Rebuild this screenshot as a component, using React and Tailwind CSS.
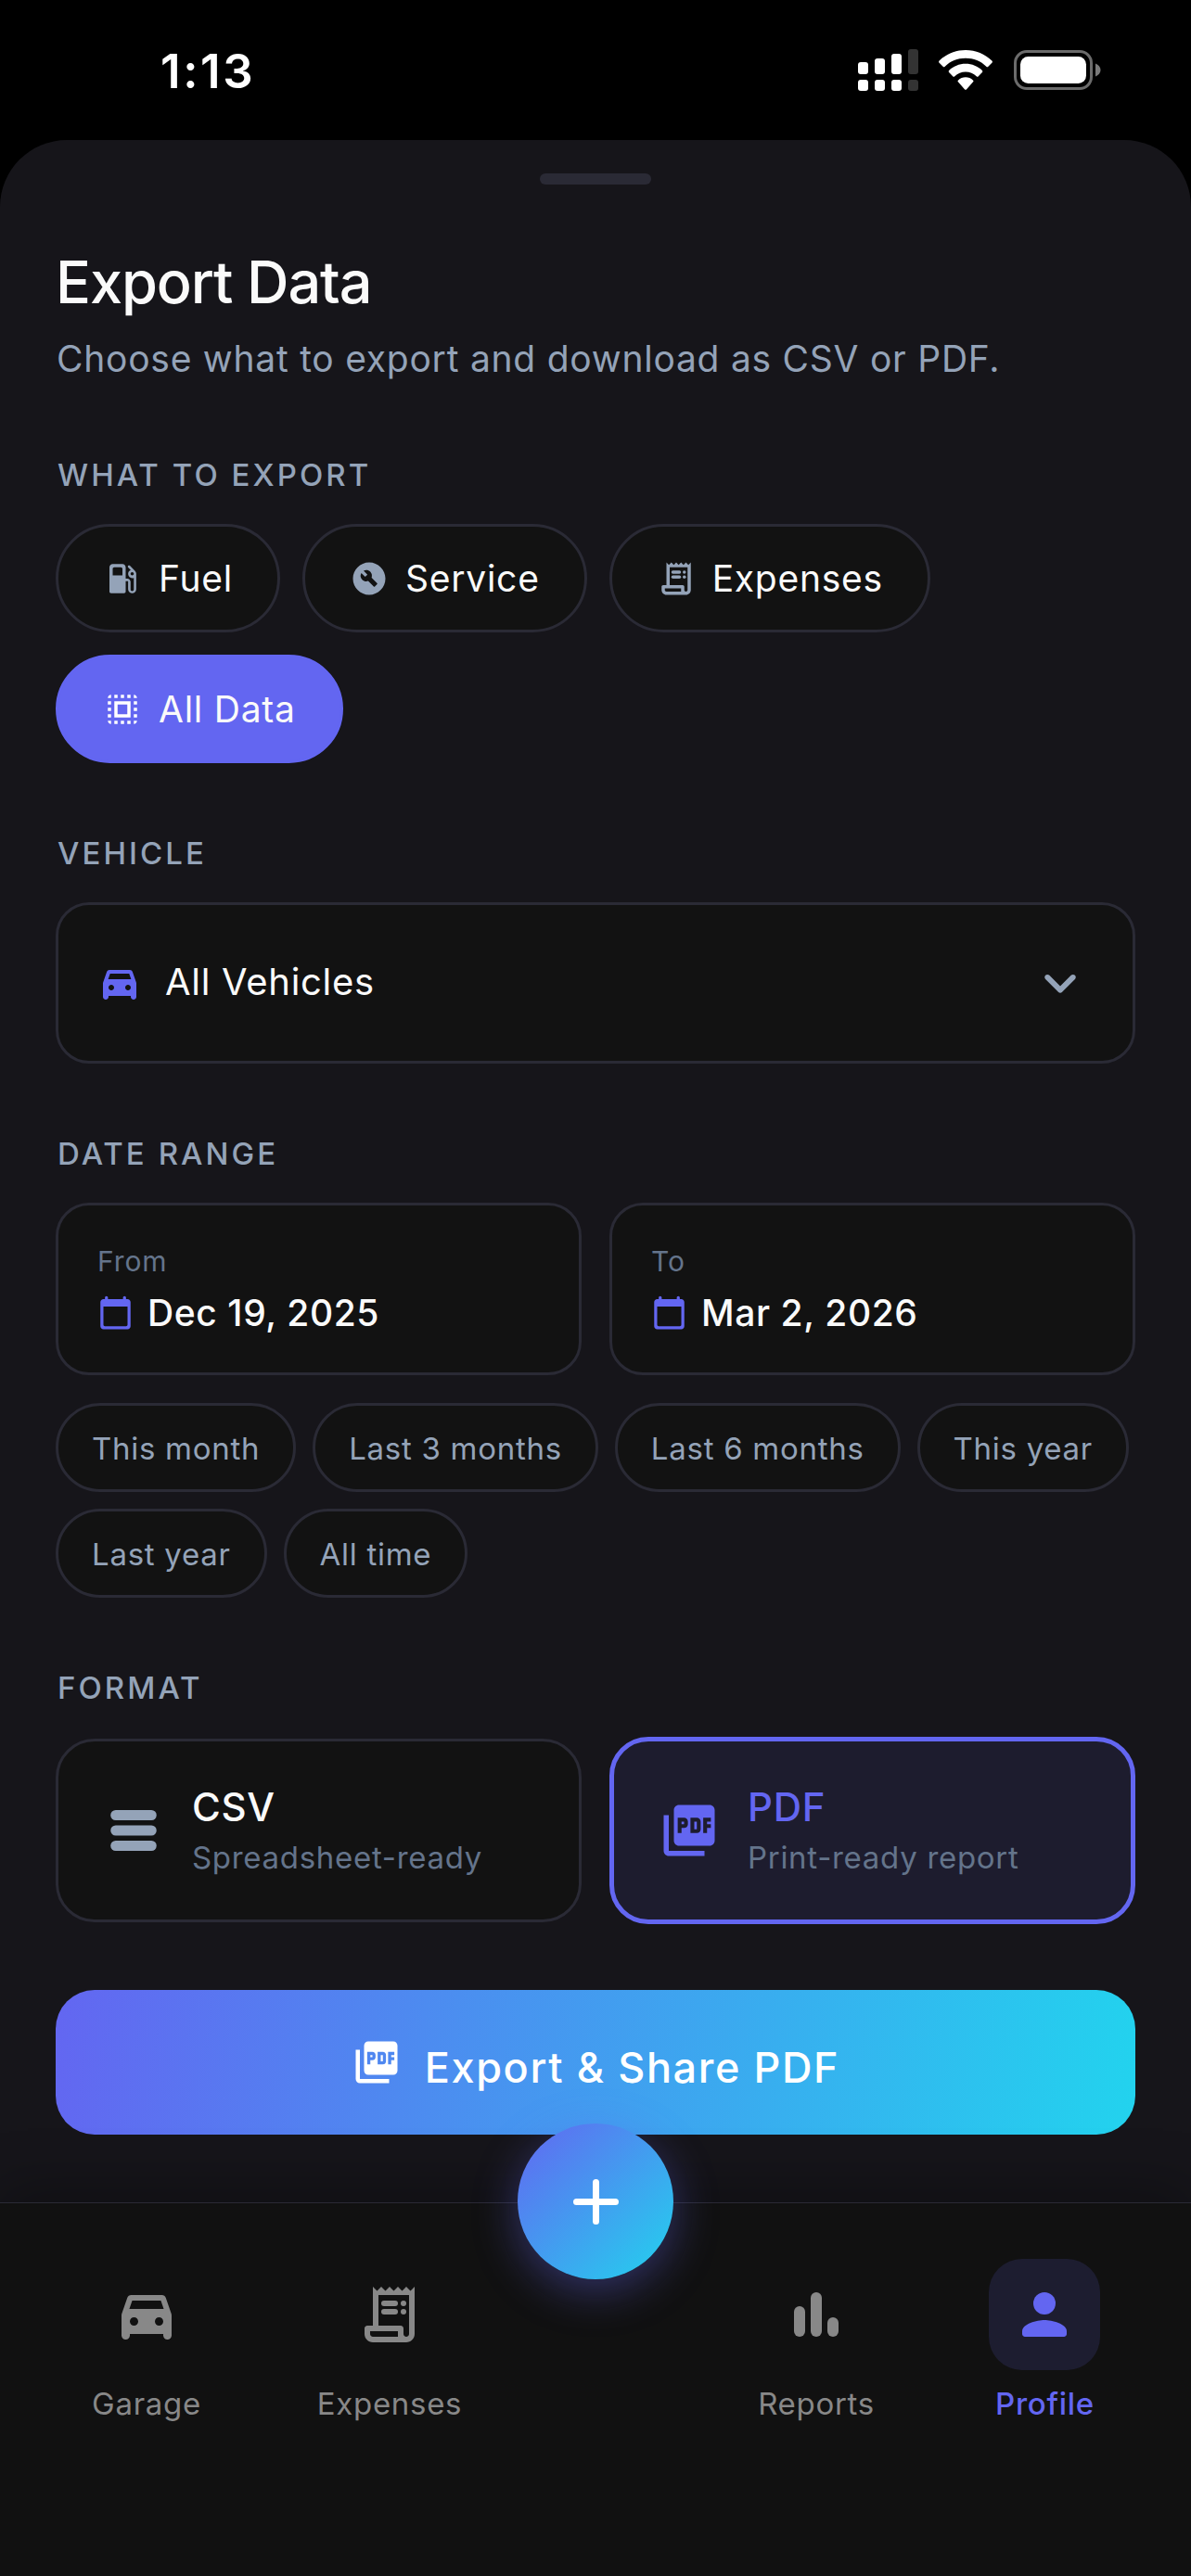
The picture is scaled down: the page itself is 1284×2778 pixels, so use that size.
import React from 'react';
import clsx from 'clsx';
import { MdBuildCircle, MdPictureAsPdf, MdSelectAll } from 'react-icons/md';

/* Rounded material glyphs that react-icons does not ship */
const Glyph = ({ size, className, children }) => (
  <svg width={size} height={size} viewBox="0 0 24 24" fill="currentColor" className={clsx('shrink-0', className)}>
    {children}
  </svg>
);

const FuelIcon = (props) => (
  <Glyph {...props}>
    <path d="M19.77 7.23l.01-.01-3.19-3.19c-.29-.29-.77-.29-1.06 0-.29.29-.29.77 0 1.06l1.58 1.58c-1.05.4-1.76 1.47-1.58 2.71.15 1.21 1.19 2.18 2.4 2.31.38.04.72-.03 1.07-.17v7.2c0 .55-.45 1-1 1s-1-.45-1-1V14c0-1.1-.9-2-2-2h-1V5c0-1.1-.9-2-2-2H6c-1.1 0-2 .9-2 2v15c0 .55.45 1 1 1h8c.55 0 1-.45 1-1v-6.5h1.5v4.86c0 1.31.94 2.5 2.24 2.63 1.5.15 2.76-1.02 2.76-2.49V9c0-.69-.28-1.32-.73-1.77zM12 10H6V6c0-.55.45-1 1-1h4c.55 0 1 .45 1 1v4zm6 0c-.55 0-1-.45-1-1s.45-1 1-1 1 .45 1 1-.45 1-1 1z" />
  </Glyph>
);

const ReceiptIcon = (props) => (
  <Glyph {...props}>
    <path d="M19.5 3.5L18 2l-1.5 1.5L15 2l-1.5 1.5L12 2l-1.5 1.5L9 2 7.5 3.5 6 2v14H4c-.55 0-1 .45-1 1v2c0 1.66 1.34 3 3 3h12c1.66 0 3-1.34 3-3V2l-1.5 1.5zM15 20H6c-.55 0-1-.45-1-1v-1h10v2zm4-1c0 .55-.45 1-1 1s-1-.45-1-1v-2c0-.55-.45-1-1-1H8V5h11v14z" />
    <rect x="9" y="7" width="6" height="2" rx="1" />
    <rect x="9" y="10" width="6" height="2" rx="1" />
    <circle cx="17" cy="8" r="1" />
    <circle cx="17" cy="11" r="1" />
  </Glyph>
);

const CarIcon = (props) => (
  <Glyph {...props}>
    <path d="M18.92 6.01C18.72 5.42 18.16 5 17.5 5h-11c-.66 0-1.21.42-1.42 1.01l-1.97 5.67c-.07.21-.11.43-.11.66v7.16c0 .83.67 1.5 1.5 1.5S6 20.33 6 19.5V19h12v.5c0 .82.67 1.5 1.5 1.5s1.5-.67 1.5-1.5v-7.16c0-.22-.04-.45-.11-.66l-1.97-5.67zM7.5 16c-.83 0-1.5-.67-1.5-1.5S6.67 13 7.5 13s1.5.67 1.5 1.5S8.33 16 7.5 16zm9 0c-.83 0-1.5-.67-1.5-1.5s.67-1.5 1.5-1.5 1.5.67 1.5 1.5-.67 1.5-1.5 1.5zM5.81 10l1.04-3h10.29l1.04 3H5.81z" />
  </Glyph>
);

const CalendarIcon = (props) => (
  <Glyph {...props}>
    <path d="M20 3h-1V2c0-.55-.45-1-1-1s-1 .45-1 1v1H7V2c0-.55-.45-1-1-1s-1 .45-1 1v1H4c-1.1 0-2 .9-2 2v16c0 1.1.9 2 2 2h16c1.1 0 2-.9 2-2V5c0-1.1-.9-2-2-2zm-1 18H5c-.55 0-1-.45-1-1V8h16v12c0 .55-.45 1-1 1z" />
  </Glyph>
);

const ChevronIcon = (props) => (
  <Glyph {...props}>
    <path d="M15.88 9.29L12 13.17 8.12 9.29c-.39-.39-1.02-.39-1.41 0-.39.39-.39 1.02 0 1.41l4.59 4.59c.39.39 1.02.39 1.41 0l4.59-4.59c.39-.39.39-1.02 0-1.41-.39-.38-1.03-.39-1.42 0z" />
  </Glyph>
);

const RowsIcon = (props) => (
  <Glyph {...props}>
    <rect x="3" y="4" width="18" height="4" rx="2" />
    <rect x="3" y="10" width="18" height="4" rx="2" />
    <rect x="3" y="16" width="18" height="4" rx="2" />
  </Glyph>
);

const BarsIcon = (props) => (
  <Glyph {...props}>
    <rect x="4" y="9" width="4" height="11" rx="2" />
    <rect x="10" y="4" width="4" height="16" rx="2" />
    <rect x="16" y="13" width="4" height="7" rx="2" />
  </Glyph>
);

const PersonIcon = (props) => (
  <Glyph {...props}>
    <circle cx="12" cy="8" r="4" />
    <path d="M12 14c-2.67 0-8 1.34-8 4v1c0 .55.45 1 1 1h14c.55 0 1-.45 1-1v-1c0-2.66-5.33-4-8-4z" />
  </Glyph>
);

const exportTypes = [
  { name: 'Fuel', icon: FuelIcon },
  { name: 'Service', icon: MdBuildCircle },
  { name: 'Expenses', icon: ReceiptIcon },
  { name: 'All Data', icon: MdSelectAll, active: true },
];

const dates = [
  { label: 'From', value: 'Dec 19, 2025' },
  { label: 'To', value: 'Mar 2, 2026' },
];

const quickRanges = ['This month', 'Last 3 months', 'Last 6 months', 'This year', 'Last year', 'All time'];

const formats = [
  { name: 'CSV', hint: 'Spreadsheet-ready', icon: RowsIcon },
  { name: 'PDF', hint: 'Print-ready report', icon: MdPictureAsPdf, active: true },
];

const SectionLabel = ({ children }) => (
  <h2 className="mt-[76px] ml-[2px] text-[33px] leading-[42px] font-medium tracking-[3.05px] text-[#94a3b8]">{children}</h2>
);

const StatusBar = () => (
  <div className="flex h-[151px] shrink-0 items-start justify-between pt-[53px] pr-[97px] pl-[173px]">
    <span className="text-[51px] leading-[48px] font-semibold tracking-[2.6px] text-white">1:13</span>
    <div className="flex items-start">
      <svg width="65" height="45" viewBox="0 0 65 45" fill="#fff">
        <rect x="0" y="14" width="11" height="13" rx="3" />
        <rect x="18" y="10" width="11" height="17" rx="3" />
        <rect x="36" y="5" width="11" height="22" rx="3" />
        <rect x="54" y="0" width="11" height="27" rx="3" fill="#333" />
        <rect x="0" y="33" width="11" height="12" rx="3" />
        <rect x="18" y="33" width="11" height="12" rx="3" />
        <rect x="36" y="33" width="11" height="12" rx="3" />
        <rect x="54" y="33" width="11" height="12" rx="3" fill="#333" />
      </svg>
      <svg width="58" height="43" viewBox="0 0 58 43" className="mt-px ml-[22px]" fill="#fff">
        <path d="M29 0C18 0 8 4.300 .6 11.600a1.500 1.500 0 0 0 0 2.100l4 4a1.500 1.500 0 0 0 2.100 0C12.500 12 20.400 8.800 29 8.800s16.500 3.200 22.300 8.900a1.500 1.500 0 0 0 2.100 0l4-4a1.500 1.500 0 0 0 0-2.100C50 4.300 40 0 29 0z" />
        <path d="M29 14.800c-6.900 0-13.200 2.700-17.900 7.200a1.500 1.500 0 0 0 0 2.100l4.100 4.100a1.500 1.500 0 0 0 2.100 0c3.100-2.900 7.200-4.700 11.700-4.700s8.600 1.800 11.700 4.700a1.500 1.500 0 0 0 2.100 0l4.100-4.100a1.500 1.500 0 0 0 0-2.100c-4.700-4.500-11-7.200-17.900-7.200z" />
        <path d="M29 29.300c-3 0-5.800 1.200-7.900 3.100a1.500 1.500 0 0 0 0 2.200l6.800 7.600a1.500 1.500 0 0 0 2.200 0l6.800-7.600a1.500 1.500 0 0 0 0-2.200c-2.100-1.900-4.900-3.100-7.900-3.100z" />
      </svg>
      <svg width="94" height="43" viewBox="0 0 94 43" className="mt-px ml-[23px]">
        <rect x="1.500" y="1.500" width="82" height="40" rx="12.500" fill="none" stroke="#6b6b6b" strokeWidth="3" />
        <rect x="7" y="7" width="71" height="29" rx="8.500" fill="#fff" />
        <path d="M88 14.500c3.300 1.200 5.500 3.900 5.500 7s-2.200 5.800-5.500 7z" fill="#7a7a7a" />
      </svg>
    </div>
  </div>
);

const NavItem = ({ name, icon: Icon, active, className }) => (
  <button className={clsx('flex flex-col items-center', active ? 'text-[#6366f1]' : 'text-[#888888]', className)}>
    <span className={clsx('flex h-[120px] w-[120px] items-center justify-center rounded-[36px]', active && 'bg-[#1d1d30]')}>
      <Icon size={72} />
    </span>
    <span className={clsx('mt-[15px] text-[33px] leading-[42px] tracking-[0.7px]', active && 'pl-px font-medium')}>{name}</span>
  </button>
);

const BottomNav = () => (
  <nav className="relative flex h-[403px] shrink-0 items-start border-t border-[#2a2a35] bg-[#111111] pt-[60px] pl-[28px] shadow-[0_-12px_60px_rgba(0,0,0,0.3)]">
    <NavItem name="Garage" icon={CarIcon} className="w-[260px]" />
    <NavItem name="Expenses" icon={ReceiptIcon} className="w-[264px]" />
    <NavItem name="Reports" icon={BarsIcon} className="ml-[180px] w-[296px]" />
    <NavItem name="Profile" icon={PersonIcon} className="w-[196px]" active />

    {/* Floating add button */}
    <button className="absolute -top-[86px] left-[558px] flex h-[168px] w-[168px] items-center justify-center rounded-full bg-[linear-gradient(135deg,#6366f1,#22d3ee)] shadow-[0_12px_48px_rgba(99,102,241,0.4)]">
      <svg width="49" height="49" viewBox="0 0 49 49" stroke="#fff" strokeWidth="7" strokeLinecap="round">
        <path d="M24.500 3.500v42M3.500 24.500h42" />
      </svg>
    </button>
  </nav>
);

export default function App() {
  return (
    <div className="flex h-[2778px] w-[1284px] flex-col overflow-hidden bg-black font-['Inter',sans-serif]">
      <StatusBar />

      <main className="flex-1 rounded-t-[72px] bg-[#16151a] px-[60px] pt-[36px]">
        <div className="mx-auto h-[12px] w-[120px] rounded-full bg-[#2a2a35]" />

        <h1 className="mt-[69px] text-[63px] leading-[72px] font-medium tracking-[-1.1px] text-[#fafafa]">Export Data</h1>
        <p className="mt-[20px] ml-px text-[39px] leading-[54px] tracking-[0.75px] text-[#94a3b8]">
          Choose what to export and download as CSV or PDF.
        </p>

        {/* What to export */}
        <div className="pt-px">
          <SectionLabel>WHAT TO EXPORT</SectionLabel>
        </div>
        <div className="mt-[32px] flex flex-wrap gap-[24px]">
          {exportTypes.map(({ name, icon: Icon, active }) => (
            <button
              key={name}
              className={clsx(
                'flex h-[117px] items-center gap-[18px] rounded-full border-[3px] px-[48px]',
                active ? 'border-[#6366f1] bg-[#6366f1]' : 'border-[#2a2a35] bg-[#121212]'
              )}
            >
              <Icon size={42} className={active ? 'text-white' : 'text-[#94a3b8]'} />
              <span className="text-[39px] leading-[54px] tracking-[0.75px] text-[#fafafa]">{name}</span>
            </button>
          ))}
        </div>

        {/* Vehicle */}
        <SectionLabel>VEHICLE</SectionLabel>
        <button className="mt-[32px] flex h-[174px] w-full items-center rounded-[36px] border-[3px] border-[#2a2a35] bg-[#121212] px-[42px]">
          <CarIcon size={48} className="text-[#6366f1]" />
          <span className="mb-[3px] ml-[25px] text-[40px] leading-[54px] tracking-[0.7px] text-[#fafafa]">All Vehicles</span>
          <ChevronIcon size={72} className="ml-auto text-[#94a3b8]" />
        </button>

        {/* Date range */}
        <SectionLabel>DATE RANGE</SectionLabel>
        <div className="mt-[32px] grid grid-cols-2 gap-[30px]">
          {dates.map(({ label, value }) => (
            <button
              key={label}
              className="flex h-[186px] flex-col items-start rounded-[36px] border-[3px] border-[#2a2a35] bg-[#121212] px-[42px] pt-[39px]"
            >
              <span className="text-[30px] leading-[42px] tracking-[0.9px] text-[#64748b]">{label}</span>
              <span className="mt-[10px] flex items-center gap-[15px]">
                <CalendarIcon size={39} className="text-[#6366f1]" />
                <span className="mt-px text-[39px] leading-[48px] font-medium tracking-[0.6px] text-[#fafafa]">{value}</span>
              </span>
            </button>
          ))}
        </div>
        <div className="mt-[30px] flex flex-wrap gap-[18px]">
          {quickRanges.map((range) => (
            <button
              key={range}
              className="h-[96px] rounded-full border-[3px] border-[#2a2a35] bg-[#121212] px-[36px] pt-[3px] text-[33px] tracking-[0.72px] text-[#94a3b8]"
            >
              {range}
            </button>
          ))}
        </div>

        {/* Format */}
        <SectionLabel>FORMAT</SectionLabel>
        <div className="mt-[32px] grid grid-cols-2 items-center gap-[30px]">
          {formats.map(({ name, hint, icon: Icon, active }) => (
            <button
              key={name}
              className={clsx(
                'flex items-center gap-[30px] rounded-[42px] px-[48px] text-left',
                active ? 'h-[202px] border-[5px] border-[#6366f1] bg-[#1d1c2e]' : 'h-[198px] border-[3px] border-[#2a2a35] bg-[#121212]'
              )}
            >
              <Icon size={66} className={active ? 'text-[#6366f1]' : 'text-[#94a3b8]'} />
              <span className="flex flex-col pt-px">
                <span className={clsx('text-[42px] leading-[54px] font-medium tracking-[0.7px]', active ? 'text-[#6366f1]' : 'text-[#fafafa]')}>
                  {name}
                </span>
                <span className="mt-[3px] text-[33px] leading-[48px] tracking-[0.7px] text-[#64748b]">{hint}</span>
              </span>
            </button>
          ))}
        </div>

        <button className="mt-[71px] flex h-[156px] w-full items-center justify-center gap-[25px] rounded-[42px] bg-[linear-gradient(97.6deg,#6366f1,#22d3ee)] text-white">
          <MdPictureAsPdf size={54} />
          <span className="mt-[11px] text-[45px] leading-[60px] font-medium tracking-[1.6px]">Export &amp; Share PDF</span>
        </button>
      </main>

      <BottomNav />
    </div>
  );
}
